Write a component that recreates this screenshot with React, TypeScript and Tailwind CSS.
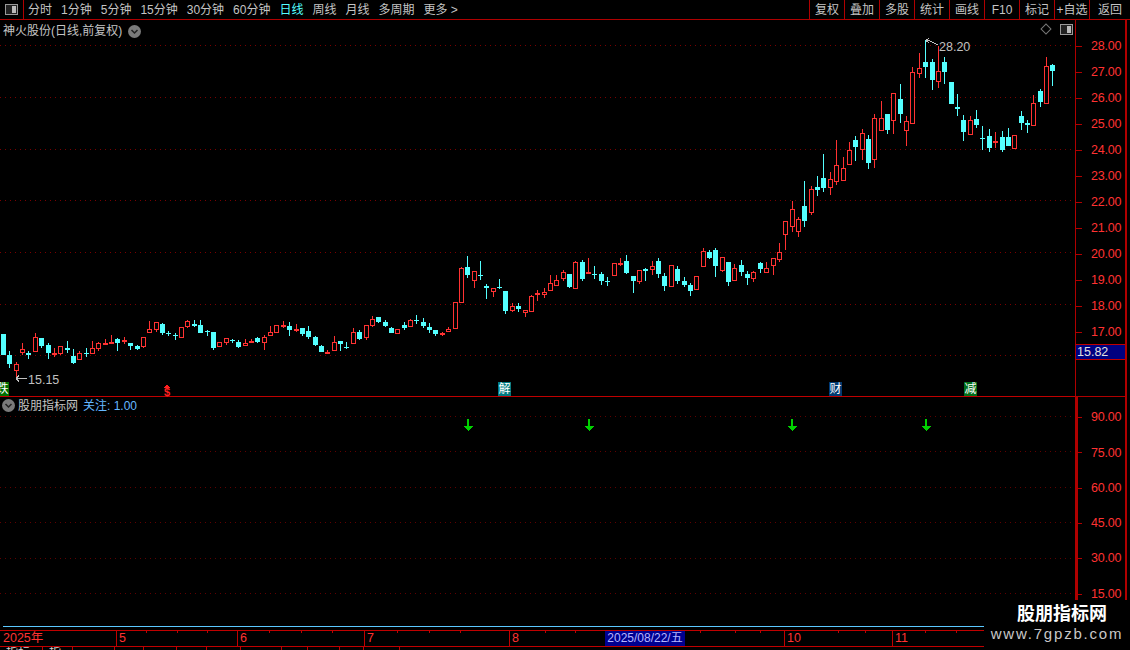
import React from 'react';

const FONT = "[font-family:'Liberation_Sans','Noto_Sans_CJK_SC',sans-serif]";

// high, body top, body bottom, low, 1 = red
const CANDLES: number[][] = [
  [334,334,355,355,0],[351,355,364,368,0],[362,364,371,379,1],[343,349,353,355,1],[351,353,355,359,0],
  [333,337,352,352,1],[338,338,346,348,0],[343,345,353,359,0],[348,353,355,357,1],[346,346,354,355,1],
  [341,348,350,353,0],[349,356,363,364,0],[351,353,360,360,1],[348,353,354,357,0],[341,348,354,354,1],
  [342,343,349,351,1],[339,343,345,345,1],[335,342,344,344,1],[338,339,343,351,0],[337,340,341,344,1],
  [343,343,346,350,0],[345,346,349,350,0],[337,337,347,348,1],[321,329,333,333,1],[322,322,330,332,1],
  [323,324,333,335,0],[331,333,334,336,0],[333,335,336,340,0],[327,327,338,338,1],[320,321,327,328,1],
  [320,324,326,327,0],[320,325,333,333,0],[330,331,332,336,0],[332,332,348,350,0],[342,342,347,347,1],
  [338,338,343,345,1],[339,340,341,343,0],[340,342,347,348,0],[339,343,346,346,1],[339,341,342,343,1],
  [337,338,342,343,0],[335,337,343,350,1],[326,332,336,336,1],[325,325,333,333,1],[321,325,327,328,1],
  [322,326,330,336,0],[324,329,331,332,1],[328,328,334,336,0],[326,331,337,339,0],[336,337,345,346,0],
  [345,346,352,352,0],[350,352,353,353,1],[336,342,351,351,1],[341,341,344,351,0],[342,347,348,349,0],
  [328,332,344,344,1],[330,332,339,340,0],[325,325,338,340,1],[316,319,326,327,1],[317,317,322,323,0],
  [320,322,326,327,0],[327,328,333,333,0],[329,329,334,334,1],[322,325,328,330,0],[319,320,327,327,1],
  [315,320,321,324,0],[318,322,326,328,0],[323,327,330,333,0],[330,330,334,336,0],[332,333,335,336,1],
  [327,329,332,332,1],[302,302,329,329,1],[267,268,303,303,1],[256,267,275,278,0],[271,271,281,288,1],
  [261,275,276,280,0],[284,286,288,299,0],[288,288,292,297,1],[279,287,288,289,0],[291,291,311,314,0],
  [303,306,311,312,1],[303,306,309,312,0],[310,310,313,317,1],[295,296,312,312,1],[290,293,295,301,1],
  [288,292,295,298,1],[275,283,291,291,1],[275,280,286,286,1],[270,272,279,281,1],[274,274,287,288,0],
  [261,262,289,289,1],[260,262,279,281,0],[258,272,273,274,1],[266,274,275,279,0],[272,274,281,285,0],
  [277,281,282,286,0],[263,263,276,276,1],[258,263,264,266,1],[255,261,273,274,0],[276,276,281,293,0],
  [270,270,282,284,1],[268,269,271,281,0],[261,266,270,275,1],[258,261,274,278,0],[273,276,286,291,0],
  [265,265,287,287,1],[266,269,281,284,0],[277,281,285,287,0],[283,285,291,296,0],[276,276,290,290,1],
  [248,251,267,267,1],[250,252,258,259,0],[248,250,266,277,0],[257,257,271,272,1],[262,262,282,286,0],
  [264,268,281,281,1],[260,265,272,276,0],[271,274,278,285,0],[271,272,279,282,1],[262,263,269,273,0],
  [262,268,273,273,1],[258,258,266,275,1],[243,252,260,262,1],[221,221,235,250,1],[201,209,227,232,1],
  [217,219,232,237,1],[181,206,221,227,0],[186,189,213,215,1],[176,187,190,196,0],[154,178,188,192,0],
  [172,179,188,195,1],[140,165,182,185,1],[157,168,181,181,1],[142,150,165,165,1],[136,140,147,161,0],
  [129,133,150,160,1],[135,139,163,169,0],[114,118,160,168,1],[101,118,131,131,1],[114,114,130,134,0],
  [93,93,121,134,1],[84,99,114,123,0],[116,121,131,146,1],[67,72,124,124,1],[53,68,74,78,1],
  [40,62,67,78,0],[59,62,80,90,0],[46,71,82,88,1],[57,62,72,84,0],[82,82,104,104,0],
  [94,107,109,116,0],[115,120,132,141,0],[116,120,135,135,1],[110,119,125,128,0],[126,138,139,150,0],
  [129,136,148,152,0],[132,141,142,148,1],[131,137,150,152,0],[128,137,146,146,0],[135,135,149,149,1],
  [111,116,123,130,0],[120,123,125,133,0],[95,103,126,126,1],[89,91,102,107,0],[57,66,104,104,1],
  [64,65,71,86,0],
];

const UPPER_GRID = [45, 97, 149, 200, 252, 304, 355];
const LOWER_GRID = [416, 451, 487, 522, 558, 593];
const UPPER_LABELS = ['28.00','27.00','26.00','25.00','24.00','23.00','22.00','21.00','20.00','19.00','18.00','17.00'];
const LOWER_LABELS = ['90.00','75.00','60.00','45.00','30.00','15.00'];
const ARROWS = [468, 589, 792, 926];
const MONTHS = [
  { label: '2025年', width: 116 },
  { label: '5', width: 121 },
  { label: '6', width: 127 },
  { label: '7', width: 145 },
  { label: '8', width: 275 },
  { label: '10', width: 108 },
  { label: '11', width: 92 },
];
const TICKS = [146, 177, 207, 269, 301, 332, 397, 429, 460, 545, 575, 640, 700, 735, 760, 838, 865, 925, 956];

function Chevron() {
  return (
    <svg width="13" height="13" viewBox="0 0 13 13" className="shrink-0">
      <circle cx="6.5" cy="6.5" r="6.5" fill="#7a7a7a" />
      <path d="M3.5 5 L6.5 8 L9.5 5" fill="none" stroke="#222" strokeWidth="1.5" />
    </svg>
  );
}

function PanelIcon() {
  return (
    <svg width="13" height="11" viewBox="0 0 13 11" shapeRendering="crispEdges">
      <rect x="0.5" y="0.5" width="12" height="10" rx="1" fill="#222" stroke="#999" />
      <rect x="7" y="2" width="4" height="7" fill="#bbb" />
    </svg>
  );
}

function Candles() {
  return (
    <svg width="1075" height="376" viewBox="0 20 1075 376" shapeRendering="crispEdges" className="block">
      {UPPER_GRID.map((y) => (
        <line key={y} x1="0" x2="1075" y1={y + 0.5} y2={y + 0.5} stroke="#7a0000" strokeDasharray="1 4" />
      ))}
      {CANDLES.map(([h, t, b, l, up], i) => {
        const cx = Math.round(3 + i * 6.36);
        const color = up ? '#ff3232' : '#54ffff';
        return (
          <g key={i}>
            <rect x={cx} y={h} width="1" height={Math.max(l - h, 1)} fill={color} />
            {up ? (
              <rect x={cx - 1.5} y={t + 0.5} width="4" height={Math.max(b - t - 1, 1)} fill="#000" stroke={color} />
            ) : (
              <rect x={cx - 2} y={t} width="5" height={Math.max(b - t, 1)} fill={color} />
            )}
          </g>
        );
      })}
      <path d="M16 378.5 H27 M16 378.5 L19 375.5 M16 378.5 L19 381.5" stroke="#c0c0c0" fill="none" />
      <path d="M926 40.5 H929 L938 45 M926 40.5 L929 38 M926 40.5 L929 43" stroke="#c0c0c0" fill="none" />
      <path d="M167 384 L170 388 H164 Z" fill="#ff2020" />
    </svg>
  );
}

function Signals() {
  return (
    <svg width="1075" height="203" viewBox="0 397 1075 203" shapeRendering="crispEdges" className="block">
      {LOWER_GRID.map((y) => (
        <line key={y} x1="0" x2="1075" y1={y + 0.5} y2={y + 0.5} stroke="#600000" strokeDasharray="1 4" />
      ))}
      {ARROWS.map((x) => (
        <path key={x} d={`M${x - 1} 419 H${x + 1} V426 H${x + 5} L${x} 431 L${x - 5} 426 H${x - 1} Z`} fill="#00d000" />
      ))}
    </svg>
  );
}

function Marker({ text, left, bg }: { text: string; left: string; bg: string }) {
  return (
    <span className={`absolute top-[362px] flex h-[14px] w-[13px] items-center justify-center text-[12px] leading-none text-white ${left} ${bg}`}>
      {text}
    </span>
  );
}

function AxisRow({ label, tick, height }: { label: string; tick: string; height: string }) {
  return (
    <div className={`flex shrink-0 items-center ${height}`}>
      <span className={`h-px bg-[#b00000] ${tick}`} />
      <span className="text-[12.5px] tracking-[-0.2px] text-[#ff3232]">{label}</span>
    </div>
  );
}

function PriceAxis() {
  return (
    <aside className="flex h-full w-[55px] flex-col">
      <div className="relative flex h-[376px] w-[52px] shrink-0 flex-col border-l border-r-2 border-[#b00000] pt-[13px]">
        {UPPER_LABELS.map((label) => (
          <AxisRow key={label} label={label} tick="mr-[9px] w-[6px]" height="h-[26px]" />
        ))}
        <div className="absolute left-0 top-[324px] flex h-[16px] w-full items-center border-y border-[#c00000] bg-[#000080] pl-[1px] text-[12.5px] text-[#e0e0e0]">
          15.82
        </div>
      </div>
      <div className="h-px w-[52px] shrink-0 bg-[#b00000]" />
      <div className="flex min-h-0 w-[52px] flex-1 flex-col border-l-[3px] border-r-2 border-[#b00000] pt-[3px]">
        {LOWER_LABELS.map((label) => (
          <AxisRow key={label} label={label} tick="mr-[9px] w-[4px]" height="h-[35.3px]" />
        ))}
      </div>
    </aside>
  );
}

function TimeAxis() {
  return (
    <div className="relative flex h-[17px] w-full border-y border-[#c00000] text-[12.5px] leading-[15px] text-[#ff3232]">
      {MONTHS.map((m, i) => (
        <span
          key={m.label}
          className={`shrink-0 border-[#c00000] pl-[2px] ${i === 0 ? 'pl-[3px]' : 'border-l'}`}
          style={{ width: m.width }}
        >
          {m.label}
        </span>
      ))}
      <svg width="984" height="2" className="absolute left-0 top-0" shapeRendering="crispEdges">
        {TICKS.map((x) => (
          <rect key={x} x={x} y="0" width="1" height="2" fill="#c00000" />
        ))}
      </svg>
      <span className="absolute left-[605px] top-0 h-[15px] w-[80px] bg-[#000090] text-center text-[12px] text-[#b4b4ff]">
        2025/08/22/五
      </span>
    </div>
  );
}

export default function App() {
  const periods = ['分时', '1分钟', '5分钟', '15分钟', '30分钟', '60分钟', '日线', '周线', '月线', '多周期', '更多 >'];
  const actions = ['复权', '叠加', '多股', '统计', '画线', 'F10', '标记', '+自选', '返回'];
  const tabs = [43, 30, 42, 29, 33, 30, 34, 41, 26, 32, 24, 36];

  return (
    <div className={`relative flex h-[650px] w-[1130px] flex-col overflow-hidden bg-black ${FONT}`}>
      <header className="flex h-[20px] shrink-0 items-center border-b border-[#b00000] text-[12px] text-[#c4c4c4]">
        <div className="flex h-full w-[24px] items-center justify-center border-r border-[#b00000] pr-[1px]">
          <PanelIcon />
        </div>
        <nav className="flex flex-1 items-center gap-[9px] pl-[4px]">
          {periods.map((p) => (
            <span key={p} className={p === '日线' ? 'text-[#54ffff]' : ''}>
              {p}
            </span>
          ))}
        </nav>
        <div className="flex h-full">
          {actions.map((a, i) => (
            <span
              key={a}
              className={`flex h-full items-center justify-center border-l border-[#b00000] ${i === 8 ? 'w-[41px]' : 'w-[35px]'}`}
            >
              {a}
            </span>
          ))}
        </div>
      </header>

      <div className="flex h-[580px] shrink-0">
        <main className="relative w-[1075px]">
          <Candles />
          <div className="absolute left-[3px] top-[2px] flex items-center gap-[6px] text-[12px] text-[#c4c4c4]">
            <span>神火股份(日线,前复权)</span>
            <Chevron />
          </div>
          <div className="absolute left-[1042px] top-[5px] h-[8px] w-[8px] rotate-45 border border-[#777]" />
          <div className="absolute left-[1060px] top-[4px]">
            <PanelIcon />
          </div>
          <span className="absolute left-[28px] top-[351px] text-[12.5px] text-[#c0c0c0]">15.15</span>
          <span className="absolute left-[939px] top-[18px] text-[12.5px] text-[#c0c0c0]">28.20</span>
          <Marker text="跌" left="left-[-4px]" bg="bg-[#006e00]" />
          <span className="absolute left-[164px] top-[367px] text-[11px] font-bold leading-[10px] text-[#ff2020]">$</span>
          <Marker text="解" left="left-[498px]" bg="bg-[#007a80]" />
          <Marker text="财" left="left-[829px]" bg="bg-[#003a70]" />
          <Marker text="减" left="left-[964px]" bg="bg-[#006e1a]" />

          <div className="h-px bg-[#c00000]" />
          <div className="relative">
            <Signals />
            <div className="absolute left-[2px] top-0 flex h-[17px] items-center gap-[3px] text-[12px]">
              <Chevron />
              <span className="text-[#c4c4c4]">股朋指标网</span>
              <span className="ml-[2px] text-[#66b8ff]">关注: 1.00</span>
            </div>
          </div>
        </main>
        <PriceAxis />
      </div>

      <div className="ml-[3px] mt-[26px] h-px shrink-0 bg-[#5ac8ff]" />
      <div className="mt-[3px] shrink-0">
        <TimeAxis />
      </div>
      <div className="flex h-[4px] shrink-0 overflow-hidden text-[12px] leading-[12px] text-[#d0d0d0]">
        {tabs.map((w, i) => (
          <span key={i} className="shrink-0 border-r border-[#c00000] pl-[6px]" style={{ width: w }}>
            {i < 2 ? '指标' : ''}
          </span>
        ))}
      </div>

      <div className="absolute bottom-0 right-0 flex h-[50px] w-[146px] flex-col items-center bg-black pt-[3px]">
        <span className="ml-[10px] text-[18px] font-bold leading-[22px] text-white">股朋指标网</span>
        <span className="text-[15px] leading-[18px] tracking-[1.8px] text-[#c8c8c8]">www.7gpzb.com</span>
      </div>
    </div>
  );
}
